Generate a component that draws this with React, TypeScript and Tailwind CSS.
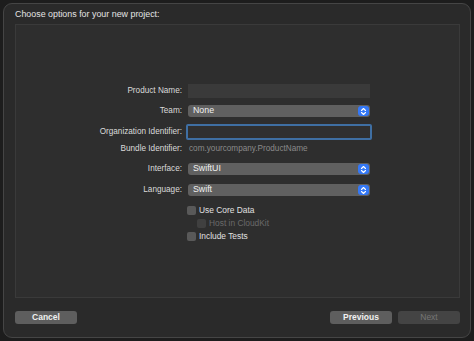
import React from "react";

const font = { fontFamily: '"Liberation Sans", Arial, sans-serif' };

function Stepper() {
  return (
    <div className="absolute right-[1px] top-[1px] bottom-[1px] w-[11px] rounded-[3px] bg-[#3478f6] flex items-center justify-center">
      <svg width="7" height="9" viewBox="0 0 7 9" fill="none">
        <path d="M1.5 3.5 L3.5 1.5 L5.5 3.5" stroke="white" strokeWidth="1.1" strokeLinecap="round" strokeLinejoin="round" />
        <path d="M1.5 5.5 L3.5 7.5 L5.5 5.5" stroke="white" strokeWidth="1.1" strokeLinecap="round" strokeLinejoin="round" />
      </svg>
    </div>
  );
}

function Popup({ value }: { value: string }) {
  return (
    <div className="relative w-[182px] h-[12px] rounded-[3px] bg-[#606060] flex items-center pl-[5px] text-[8.8px] text-[#f0f0f0]">
      {value}
      <Stepper />
    </div>
  );
}

function Label({ children }: { children: React.ReactNode }) {
  return (
    <div className="w-[166px] text-right text-[8.2px] text-[#dadada] leading-none">{children}</div>
  );
}

function Checkbox({ label, disabled }: { label: string; disabled?: boolean }) {
  return (
    <div className="flex items-center h-[9px]">
      <div className={`w-[9px] h-[9px] rounded-[2px] ${disabled ? "bg-[#404040]" : "bg-[#595959]"}`} />
      <span className={`ml-[3px] text-[8.4px] leading-none ${disabled ? "text-[#6a6a6a]" : "text-[#e0e0e0]"}`}>{label}</span>
    </div>
  );
}

export default function App() {
  return (
    <div className="w-[474px] h-[341px] bg-[#1d1d1d] p-[3px]" style={font}>
      <div className="w-[468px] h-[335px] rounded-[9px] border border-[#454545] bg-[#2a2a2a] pt-[4px] pl-[11px] pr-[10px] flex flex-col">
        <div className="h-[12px] leading-[12px] text-[8.9px] text-[#e4e4e4]">Choose options for your new project:</div>
        <div className="mt-[4px] w-[445px] h-[274px] border border-[#3a3a3a] bg-[#2e2e2e] pt-[59px] flex flex-col">
          <div className="flex items-center h-[14px]">
            <Label>Product Name:</Label>
            <div className="ml-[6px] w-[182px] h-[14px] bg-[#3a3a3a]" />
          </div>
          <div className="flex items-center h-[12px] mt-[7px]">
            <Label>Team:</Label>
            <div className="ml-[6px]"><Popup value="None" /></div>
          </div>
          <div className="flex items-center h-[16px] mt-[7px]">
            <Label>Organization Identifier:</Label>
            <div className="ml-[4px] w-[186px] h-[16px] border-2 border-[#3f6fa3] rounded-[2px] bg-[#303030]" />
          </div>
          <div className="flex items-center h-[12px] mt-[3px]">
            <Label>Bundle Identifier:</Label>
            <div className="ml-[7px] text-[8.2px] text-[#8a8a8a] leading-none">com.yourcompany.ProductName</div>
          </div>
          <div className="flex items-center h-[12px] mt-[8px]">
            <Label>Interface:</Label>
            <div className="ml-[6px]"><Popup value="SwiftUI" /></div>
          </div>
          <div className="flex items-center h-[12px] mt-[9px]">
            <Label>Language:</Label>
            <div className="ml-[6px]"><Popup value="Swift" /></div>
          </div>
          <div className="pl-[171px] mt-[10px]">
            <Checkbox label="Use Core Data" />
          </div>
          <div className="pl-[181px] mt-[4px]">
            <Checkbox label="Host in CloudKit" disabled />
          </div>
          <div className="pl-[171px] mt-[4px]">
            <Checkbox label="Include Tests" />
          </div>
        </div>
        <div className="mt-[13px] flex items-center w-[445px]">
          <div className="w-[62px] h-[13px] rounded-[3px] bg-[#5e5e5e] flex items-center justify-center text-[8.5px] font-bold text-[#f0f0f0]">Cancel</div>
          <div className="flex-1" />
          <div className="w-[62px] h-[13px] rounded-[3px] bg-[#5e5e5e] flex items-center justify-center text-[8.5px] font-bold text-[#f0f0f0]">Previous</div>
          <div className="ml-[6px] w-[62px] h-[13px] rounded-[3px] bg-[#444444] flex items-center justify-center text-[8.5px] text-[#767676]">Next</div>
        </div>
      </div>
    </div>
  );
}
